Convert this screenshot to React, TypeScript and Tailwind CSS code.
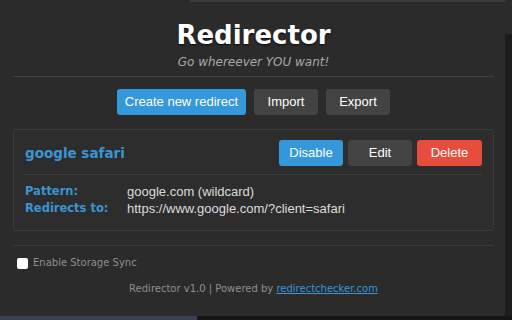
import React from "react";

const verdana = { fontFamily: '"DejaVu Sans", Verdana, sans-serif' };
const arial = { fontFamily: '"Liberation Sans", Arial, sans-serif' };

export default function App() {
  return (
    <div className="w-[512px] h-[320px] bg-[#2b2b2b] overflow-hidden flex flex-col">
      <div className="flex flex-1">
        <div className="w-[505px] flex flex-col pl-[13px] pr-[11px]">
          <div className="h-[2px] -ml-[13px] -mr-[11px] flex">
            <div className="w-[190px]" />
            <div className="flex-1 bg-[#3c3c3c]" />
          </div>
          <h1
            className="text-center text-white font-bold text-[26px] leading-none mt-[20px] [text-shadow:0_1px_2px_rgba(0,0,0,0.8)]"
            style={verdana}
          >
            Redirector
          </h1>
          <p
            className="text-center italic text-[#a8a8a8] text-[12px] leading-none mt-[8px]"
            style={verdana}
          >
            Go whereever YOU want!
          </p>
          <div className="h-px bg-[#414141] mt-[8px]" />
          <div className="flex justify-center gap-[8px] mt-[12px]" style={arial}>
            <button className="w-[129px] h-[26px] rounded-[3px] bg-[#3498db] text-white text-[13px]">
              Create new redirect
            </button>
            <button className="w-[64px] h-[26px] rounded-[3px] bg-[#434343] text-white text-[13px]">
              Import
            </button>
            <button className="w-[64px] h-[26px] rounded-[3px] bg-[#434343] text-white text-[13px]">
              Export
            </button>
          </div>
          <div className="mt-[14px] h-[102px] border border-[#3b3b3b] rounded-[3px] bg-[#2d2d2d] px-[11px] pt-[10px]">
            <div className="flex items-center justify-between">
              <span className="text-[#3a95d6] font-bold text-[13.5px]" style={verdana}>
                google safari
              </span>
              <div className="flex gap-[5px]" style={arial}>
                <button className="w-[64px] h-[26px] rounded-[3px] bg-[#3498db] text-white text-[13px]">
                  Disable
                </button>
                <button className="w-[64px] h-[26px] rounded-[3px] bg-[#434343] text-white text-[13px]">
                  Edit
                </button>
                <button className="w-[65px] h-[26px] rounded-[3px] bg-[#e74c3c] text-white text-[13px]">
                  Delete
                </button>
              </div>
            </div>
            <div className="h-px bg-[#3d3d3d] mt-[8px]" />
            <div className="grid grid-cols-[102px_1fr] mt-[8px] leading-[17px]">
              <span className="text-[#3a95d6] font-bold text-[11.5px]" style={verdana}>Pattern:</span>
              <span className="text-[#dcdcdc] text-[13px]" style={arial}>google.com (wildcard)</span>
              <span className="text-[#3a95d6] font-bold text-[11.5px]" style={verdana}>Redirects to:</span>
              <span className="text-[#dcdcdc] text-[13px]" style={arial}>https://www.google.com/?client=safari</span>
            </div>
          </div>
          <div className="h-px bg-[#3a3a3a] mt-[14px]" />
          <label className="flex items-center gap-[5px] mt-[11px] ml-[4px] text-[10px] leading-[12px] text-[#8f8f8f]" style={verdana}>
            <span className="w-[11px] h-[11px] rounded-[2px] bg-white inline-block" />
            Enable Storage Sync
          </label>
          <p className="text-center text-[10px] leading-[12px] text-[#8f8f8f] mt-[14px]" style={verdana}>
            Redirector v1.0 | Powered by{" "}
            <a className="text-[#3a95d6] underline">redirectchecker.com</a>
          </p>
        </div>
        <div className="w-[7px] flex flex-col">
          <div className="h-[34px]" />
          <div className="flex-1 bg-[#1c1c1c]" />
        </div>
      </div>
      <div className="h-[4px] flex">
        <div className="w-[197px] bg-[#3a4152]" />
        <div className="flex-1 bg-[#161616]" />
      </div>
    </div>
  );
}
